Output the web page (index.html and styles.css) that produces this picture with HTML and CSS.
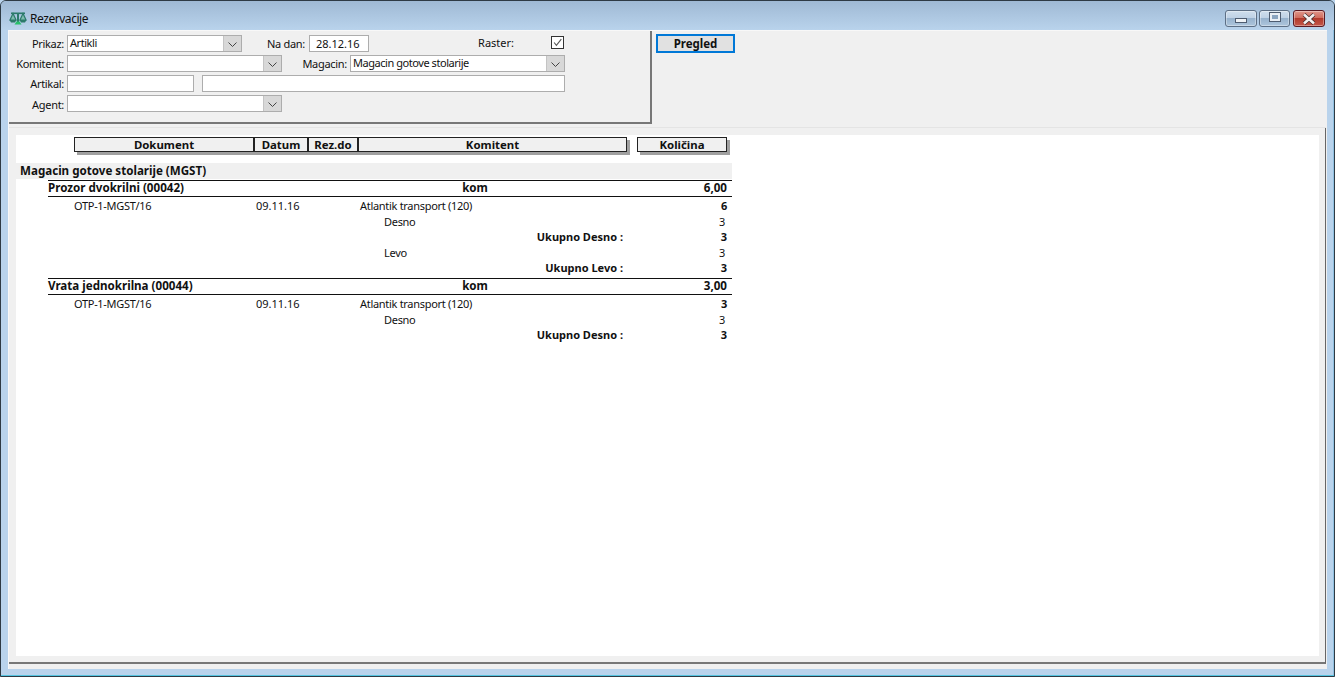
FILE: index.html
```html
<!DOCTYPE html>
<html lang="en">
<head>
    <meta charset="UTF-8">
    <title>Rezervacije</title>
    <link rel="stylesheet" href="styles.css">
</head>
<body>
    <div class="window">
        <div class="titlebar">
            <svg class="app-icon" width="18" height="13" viewBox="0 0 18 13">
                <rect x="2" y="0.5" width="14" height="1.6" fill="#2c7a6a"/>
                <rect x="8" y="1" width="2" height="9" fill="#2c7a6a"/>
                <path d="M4 1.5 L1 8 H7 Z M14 1.5 L11 8 H17 Z" fill="#7fbcae" stroke="#2c7a6a" stroke-width="1.2"/>
                <path d="M0.5 8 H7.5 L6 10.5 H2 Z M10.5 8 H17.5 L16 10.5 H12 Z" fill="#2c7a6a"/>
                <path d="M5.5 12.5 L7.5 9.5 H10.5 L12.5 12.5 Z" fill="#27c06a"/>
            </svg>
            <span class="title">Rezervacije</span>
            <div class="win-buttons">
                <div class="win-btn"><span class="glyph-min"></span></div>
                <div class="win-btn mid"><span class="glyph-max"></span></div>
                <div class="win-btn close">
                    <svg width="16" height="12" viewBox="0 0 16 12"><path d="M3 1.5 L13 10.5 M13 1.5 L3 10.5" stroke="#3d2a2a" stroke-width="4"/><path d="M3 1.5 L13 10.5 M13 1.5 L3 10.5" stroke="#f4f0f0" stroke-width="2.6"/></svg>
                </div>
            </div>
        </div>

        <div class="client">
            <div class="toolbar">
                <div class="filter-panel">
                    <div class="form-row">
                        <label class="lbl">Prikaz:</label>
                        <div class="combo w175"><span class="combo-text">Artikli</span><span class="combo-arrow"><svg width="9" height="5" viewBox="0 0 9 5"><path d="M0.5 0.5 L4.5 4.5 L8.5 0.5" fill="none" stroke="#444"/></svg></span></div>
                        <label class="lbl lbl-date">Na dan:</label>
                        <div class="field date-field">28.12.16</div>
                        <label class="lbl lbl-raster">Raster:</label>
                        <div class="checkbox"><svg width="13" height="13" viewBox="0 0 13 13"><path d="M2.5 6.5 L5.2 9.8 L11 2.5" fill="none" stroke="#555" stroke-width="1.3"/></svg></div>
                    </div>
                    <div class="form-row">
                        <label class="lbl">Komitent:</label>
                        <div class="combo w215"><span class="combo-text"></span><span class="combo-arrow"><svg width="9" height="5" viewBox="0 0 9 5"><path d="M0.5 0.5 L4.5 4.5 L8.5 0.5" fill="none" stroke="#444"/></svg></span></div>
                        <label class="lbl lbl-magacin">Magacin:</label>
                        <div class="combo w215"><span class="combo-text">Magacin gotove stolarije</span><span class="combo-arrow"><svg width="9" height="5" viewBox="0 0 9 5"><path d="M0.5 0.5 L4.5 4.5 L8.5 0.5" fill="none" stroke="#444"/></svg></span></div>
                    </div>
                    <div class="form-row">
                        <label class="lbl">Artikal:</label>
                        <div class="field art-code"></div>
                        <div class="field art-name"></div>
                    </div>
                    <div class="form-row">
                        <label class="lbl lbl-agent">Agent:</label>
                        <div class="combo w215"><span class="combo-text"></span><span class="combo-arrow"><svg width="9" height="5" viewBox="0 0 9 5"><path d="M0.5 0.5 L4.5 4.5 L8.5 0.5" fill="none" stroke="#444"/></svg></span></div>
                    </div>
                </div>
                <button class="preview-btn">Pregled</button>
            </div>

            <div class="report-wrap">
                <div class="report">
                    <div class="report-inner">
                        <div class="col-headers">
                            <div class="col-head c-doc">Dokument</div>
                            <div class="col-head c-date">Datum</div>
                            <div class="col-head c-rez">Rez.do</div>
                            <div class="col-head c-kom">Komitent</div>
                            <div class="col-head c-qty">Količina</div>
                        </div>

                        <div class="store-row">Magacin gotove stolarije (MGST)</div>

                        <div class="item-row">
                            <span>Prozor dvokrilni (00042)</span><span class="unit">kom</span><span class="amount">6,00</span>
                        </div>
                        <div class="line tall first">
                            <span class="doc">OTP-1-MGST/16</span><span class="date">09.11.16</span><span class="partner">Atlantik transport (120)</span><span class="val strong">6</span>
                        </div>
                        <div class="line tall">
                            <span class="sub">Desno</span><span class="val thin">3</span>
                        </div>
                        <div class="line sum">
                            <span class="total">Ukupno Desno :</span><span class="val strong">3</span>
                        </div>
                        <div class="line tall">
                            <span class="sub">Levo</span><span class="val thin">3</span>
                        </div>
                        <div class="line sum">
                            <span class="total">Ukupno Levo :</span><span class="val strong">3</span>
                        </div>

                        <div class="item-row next">
                            <span>Vrata jednokrilna (00044)</span><span class="unit">kom</span><span class="amount">3,00</span>
                        </div>
                        <div class="line tall first">
                            <span class="doc">OTP-1-MGST/16</span><span class="date">09.11.16</span><span class="partner">Atlantik transport (120)</span><span class="val strong">3</span>
                        </div>
                        <div class="line tall">
                            <span class="sub">Desno</span><span class="val thin">3</span>
                        </div>
                        <div class="line sum">
                            <span class="total">Ukupno Desno :</span><span class="val strong">3</span>
                        </div>
                    </div>
                </div>
            </div>
        </div>
    </div>
</body>
</html>
```

FILE: styles.css
```css
* {
    margin: 0;
    padding: 0;
    box-sizing: border-box;
}

html, body {
    height: 100%;
    overflow: hidden;
}

body {
    font-family: "Noto Sans", sans-serif;
    font-size: 11px;
    color: #111;
    background: #b9d3ec;
}

.window {
    height: 100vh;
    display: flex;
    flex-direction: column;
    background: #b9d3ec;
    border: 1px solid #2e3a44;
    border-radius: 6px 6px 0 0;
    box-shadow: inset 0 -1px 0 #55c4e0, inset -1px 0 0 #8fc0e0;
}

/* title bar */
.titlebar {
    height: 29px;
    flex: none;
    display: flex;
    align-items: center;
    padding: 6px 9px 0 8px;
    background: linear-gradient(#9fb9d4, #b9d3ec);
    border-radius: 5px 5px 0 0;
}

.app-icon {
    margin-right: 3px;
}

.title {
    font-size: 12px;
    letter-spacing: -0.45px;
    color: #111;
}

.win-buttons {
    margin-left: auto;
    display: flex;
    gap: 2px;
}

.win-btn {
    width: 32px;
    height: 17px;
    border: 1px solid #5d6f85;
    border-radius: 3px;
    display: flex;
    align-items: center;
    justify-content: center;
    background: linear-gradient(#cfdeed 0%, #bed1e5 48%, #97b2cd 50%, #adc5dc 100%);
    box-shadow: inset 0 0 0 1px rgba(255, 255, 255, 0.35);
}

.win-btn.mid {
    width: 31px;
    margin-right: 1px;
}

.win-btn.close {
    border-color: #5a1a22;
    background: linear-gradient(#e0968a 0%, #cf6a5c 48%, #b23a2c 50%, #c4574a 100%);
}

.glyph-min {
    display: block;
    width: 12px;
    height: 5px;
    margin-top: 3px;
    background: #eef2f6;
    border: 1px solid #4e5c70;
}

.glyph-max {
    display: block;
    width: 10px;
    height: 8px;
    margin-top: -3px;
    background: #8aa4bf;
    border: 2px solid #e9eef4;
    outline: 1px solid #4e5c70;
}

/* client area */
.client {
    flex: 1;
    margin: 0 7px 7px 7px;
    padding: 0 1px 5px 0;
    display: flex;
    flex-direction: column;
    background: #f0f0f0;
    border-top: 1px solid #f8f8f8;
    border-left: 1px solid #f8f8f8;
    min-height: 0;
}

.toolbar {
    height: 97px;
    flex: none;
    display: flex;
    align-items: flex-start;
    border-bottom: 1px solid #e4e4e4;
}

.filter-panel {
    width: 643px;
    height: 93px;
    padding-top: 4px;
    display: flex;
    flex-direction: column;
    gap: 3px;
    background: #f0f0f0;
    border-right: 2px solid #777;
    border-bottom: 2px solid #777;
}

.form-row {
    display: flex;
    align-items: center;
    height: 17px;
}

.lbl {
    width: 55px;
    margin-right: 3px;
    text-align: right;
    letter-spacing: -0.3px;
    color: #111;
    white-space: nowrap;
}

.lbl-date {
    width: 63px;
    margin-right: 4px;
}

.lbl-raster {
    width: 36px;
    margin-left: 109px;
    margin-right: 37px;
    align-self: flex-start;
    line-height: 15px;
    letter-spacing: 0;
}

.lbl-magacin {
    width: 65px;
}

.lbl-agent {
    padding-top: 2px;
}

.combo {
    height: 17px;
    display: flex;
    background: #fff;
    border: 1px solid #adadad;
}

.w175 { width: 175px; }
.w215 { width: 215px; }

.combo-text {
    flex: 1;
    padding-left: 2px;
    line-height: 14px;
    letter-spacing: -0.45px;
    white-space: nowrap;
}

.combo-arrow {
    width: 18px;
    display: flex;
    align-items: center;
    justify-content: center;
    background: #d8d8d8;
    border-left: 1px solid #c4c4c4;
    padding-top: 2px;
}

.field {
    height: 17px;
    background: #fff;
    border: 1px solid #adadad;
    line-height: 15px;
}

.date-field {
    width: 60px;
    padding-left: 6px;
}

.art-code {
    width: 127px;
}

.art-name {
    width: 363px;
    margin-left: 8px;
}

.checkbox {
    width: 13px;
    height: 13px;
    align-self: flex-start;
    margin-top: 1px;
    background: #fff;
    border: 1px solid #333;
    display: flex;
    align-items: center;
    justify-content: center;
}

.preview-btn {
    width: 79px;
    height: 19px;
    margin: 3px 0 0 4px;
    border: 2px solid #0078d7;
    background: #e1e1e1;
    font: bold 11.5px "Noto Sans", sans-serif;
    color: #111;
}

/* report */
.report-wrap {
    flex: 1;
    min-height: 0;
    display: flex;
    padding: 7px 6px 6px 7px;
    border-right: 1px solid #666;
    border-bottom: 2px solid #777;
}

.report {
    flex: 1;
    background: #fff;
}

.report-inner {
    width: 716px;
    padding-top: 2px;
}

.col-headers {
    display: flex;
    margin-left: 58px;
    height: 16px;
}

.col-head {
    height: 15px;
    border: 1px solid #222;
    background: #f0f0f0;
    box-shadow: 3px 3px 0 #a0a0a0;
    text-align: center;
    font-size: 11.4px;
    font-weight: bold;
    line-height: 13px;
}

.c-doc { width: 180px; }
.c-date { width: 54px; }
.c-rez { width: 50px; }
.c-kom { width: 269px; }
.c-qty { width: 90px; margin-left: 10px; }

.store-row {
    height: 16px;
    margin-top: 10px;
    padding-left: 4px;
    background: #f0f0f0;
    font-size: 11.6px;
    font-weight: bold;
    line-height: 15px;
}

.item-row {
    margin: 1px 0 0 32px;
    height: 17px;
    display: grid;
    grid-template-columns: 400px 54px 1fr;
    padding-right: 5px;
    border-top: 1px solid #111;
    border-bottom: 1px solid #111;
    font-size: 11.6px;
    font-weight: bold;
    line-height: 14px;
}

.item-row.next {
    margin-top: 2px;
}

.unit {
    text-align: center;
}

.amount {
    text-align: right;
}

.line {
    display: grid;
    grid-template-columns: 58px 182px 104px 24px 239px 1fr;
    height: 15px;
    padding-right: 5px;
    line-height: 15px;
    letter-spacing: -0.3px;
    white-space: nowrap;
}

.line.tall {
    height: 16px;
}

.line.sum {
    line-height: 13px;
    letter-spacing: 0;
}

.line.first {
    margin-top: 1px;
}

.doc { grid-column: 2; }
.date { grid-column: 3; letter-spacing: 0; }
.partner { grid-column: 4 / 6; }
.sub { grid-column: 5; }
.total { grid-column: 5; text-align: right; font-weight: bold; }
.val { grid-column: 6; text-align: right; }
.strong { font-weight: bold; }
.thin { padding-right: 2px; }
```
